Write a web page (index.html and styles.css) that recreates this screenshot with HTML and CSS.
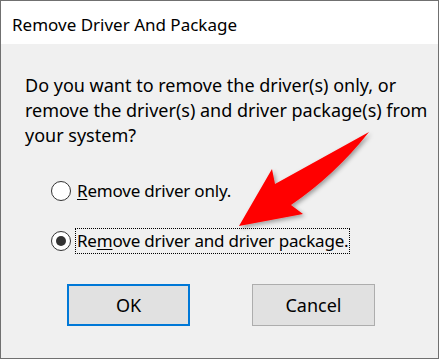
FILE: index.html
```html
<!DOCTYPE html>
<html lang="en">
<head>
    <meta charset="UTF-8">
    <title>Remove Driver And Package</title>
    <link rel="stylesheet" href="styles.css">
</head>
<body>
    <div class="window">
        <div class="titlebar">Remove Driver And Package</div>
        <div class="content">
            <p class="question">Do you want to remove the driver(s) only, or remove the driver(s) and driver package(s) from your system?</p>

            <div class="options">
                <label class="option">
                    <span class="radio"></span>
                    <span class="option-text"><u>R</u>emove driver only.</span>
                </label>
                <label class="option">
                    <span class="radio checked"></span>
                    <span class="option-text focused">Re<u>m</u>ove driver and driver package.</span>
                </label>
            </div>

            <div class="buttons">
                <button class="btn default">OK</button>
                <button class="btn">Cancel</button>
            </div>
        </div>
    </div>

    <svg class="arrow" width="440" height="359" viewBox="0 0 440 359">
        <defs>
            <filter id="shadow" x="-20%" y="-20%" width="140%" height="140%">
                <feDropShadow dx="2" dy="2" stdDeviation="2" flood-color="#000" flood-opacity="0.35"/>
            </filter>
        </defs>
        <path d="M369,132 L275,184 L272,169 L239,226 L303,214 L291,205 Q335,175 369,132 Z" fill="#ff0000" filter="url(#shadow)"/>
    </svg>
</body>
</html>
```

FILE: styles.css
```css
body {
    margin: 0;
    font-family: 'Noto Sans', 'Open Sans', sans-serif;
    color: #000;
    background: #fff;
}
.window {
    position: relative;
    width: 439px;
    height: 359px;
    box-sizing: border-box;
    border: 1px solid #707070;
    display: flex;
    flex-direction: column;
}
.titlebar {
    height: 43px;
    padding: 4px 0 0 11px;
    box-sizing: border-box;
    display: flex;
    align-items: center;
    font-size: 17px;
    background: #fff;
}
.content {
    flex: 1;
    background: #f0f0f0;
    padding: 29px 0 0 24px;
}
.question {
    margin: 0;
    width: 412px;
    font-size: 18px;
    line-height: 25px;
}
.options {
    margin: 30px 0 0 26px;
    display: flex;
    flex-direction: column;
    gap: 24px;
}
.option {
    display: flex;
    align-items: center;
    gap: 4px;
    font-size: 17px;
    letter-spacing: -0.2px;
}
.radio {
    width: 18px;
    height: 18px;
    border: 1px solid #333;
    border-radius: 50%;
    background: #fff;
    display: flex;
    align-items: center;
    justify-content: center;
}
.radio.checked::after {
    content: "";
    width: 10px;
    height: 10px;
    border-radius: 50%;
    background: #333;
}
.option-text {
    line-height: 24px;
    padding: 0 1px;
    border: 1px solid transparent;
}
.option-text.focused {
    border: 1px dotted #000;
}
.option-text u {
    text-underline-offset: 2px;
}
.buttons {
    margin: 30px 0 0 42px;
    display: flex;
    gap: 62px;
}
.btn {
    width: 123px;
    height: 42px;
    font-family: inherit;
    font-size: 18px;
    color: #000;
    background: #e1e1e1;
    border: 1px solid #adadad;
    border-radius: 0;
}
.btn.default {
    border: 2px solid #0078d7;
}
.arrow {
    position: absolute;
    left: 0;
    top: 0;
    pointer-events: none;
}
```
